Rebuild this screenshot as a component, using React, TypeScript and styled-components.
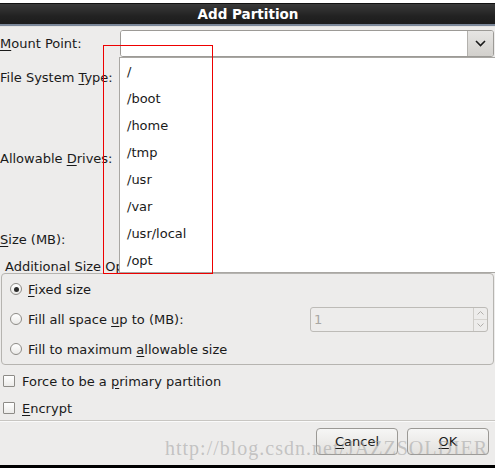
import React from "react";
import styled, { createGlobalStyle } from "styled-components";

const Global = createGlobalStyle`
  html, body { margin: 0; padding: 0; background: #edeceb; }
  body { font-family: "DejaVu Sans", "Noto Sans", sans-serif; font-size: 13px; color: #1a1a1a; }
  * { box-sizing: border-box; }
`;

const Window = styled.div`
  position: relative;
  width: 495px;
  height: 468px;
  overflow: hidden;
  display: flex;
  flex-direction: column;
  background: #edeceb;
`;

const TopStrip = styled.div`
  height: 3px;
  background: #ffffff;
  overflow: hidden;
  display: flex;
  justify-content: center;
`;

const ClippedHeading = styled.div`
  font-weight: bold;
  font-size: 22px;
  line-height: 22px;
  margin-top: -19px;
  color: #000;
  letter-spacing: 1px;
  white-space: nowrap;
`;

const TitleBar = styled.div`
  height: 23px;
  background: linear-gradient(#3a3a3a, #222222 60%, #1c1c1c);
  border-top: 1px solid #111;
  border-bottom: 2px solid #7b8799;
  color: #ffffff;
  font-weight: bold;
  font-size: 13.5px;
  display: flex;
  align-items: center;
  justify-content: center;
  padding-left: 1px;
  box-shadow: 0 1px 0 #e4e3e1;
`;

const Body = styled.div`
  display: flex;
  flex-direction: column;
  padding: 4px 1px 0 0;
`;

const FieldRow = styled.div<{ $h: number; $gap?: number }>`
  display: grid;
  grid-template-columns: 120px 1fr;
  align-items: center;
  height: ${(p) => p.$h}px;
  margin-bottom: ${(p) => p.$gap ?? 8}px;
`;

const Label = styled.span`
  white-space: nowrap;
`;

const U = styled.span`
  text-decoration: underline;
  text-underline-offset: 2px;
`;

const Combo = styled.div`
  height: 27px;
  display: flex;
  border: 1px solid #9c9a96;
  border-radius: 3px;
  background: #fff;
  overflow: hidden;
`;

const ComboEntry = styled.div`
  flex: 1;
  background: #fff;
`;

const ComboButton = styled.div`
  width: 26px;
  border-left: 1px solid #b3b1ad;
  background: linear-gradient(#e6e5e3, #d2d0cc);
  display: flex;
  align-items: center;
  justify-content: center;
`;

const FrameTitle = styled.div`
  height: 13px;
  line-height: 13px;
  padding-left: 5px;
  white-space: nowrap;
`;

const FrameBox = styled.div`
  margin: 0 0 0 1px;
  border: 1px solid #b6b4b0;
  border-radius: 4px;
  padding: 4px 5px 4px 0;
  display: flex;
  flex-direction: column;
  gap: 8px;
`;

const OptionRow = styled.div`
  height: 22px;
  display: flex;
  align-items: center;
`;

const Radio = styled.span<{ $on?: boolean }>`
  width: 12px;
  height: 12px;
  margin: 0 6px 0 8px;
  border-radius: 50%;
  border: 1px solid #8d8b87;
  background: linear-gradient(#ffffff, #ebeae8);
  display: inline-flex;
  align-items: center;
  justify-content: center;
  &::after {
    content: "";
    width: 5px;
    height: 5px;
    border-radius: 50%;
    background: ${(p) => (p.$on ? "#2a2a2a" : "transparent")};
  }
`;

const Spin = styled.div`
  margin-left: auto;
  width: 178px;
  height: 25px;
  flex-shrink: 0;
  display: flex;
  border: 1px solid #bdbbb7;
  border-radius: 3px;
  background: #edeceb;
  color: #a8a6a2;
`;

const SpinValue = styled.div`
  flex: 1;
  padding-left: 3px;
  display: flex;
  align-items: center;
`;

const SpinButtons = styled.div`
  width: 14px;
  border-left: 1px solid #cfcdc9;
  display: flex;
  flex-direction: column;
`;

const SpinHalf = styled.div<{ $top?: boolean }>`
  flex: 1;
  display: flex;
  align-items: center;
  justify-content: center;
  border-top: ${(p) => (p.$top ? "none" : "1px solid #d6d4d0")};
`;

const CheckRow = styled.div<{ $mt: number }>`
  height: 20px;
  margin-top: ${(p) => p.$mt}px;
  display: flex;
  align-items: center;
`;

const Check = styled.span`
  width: 12px;
  height: 12px;
  margin: 0 7px 0 3px;
  border: 1px solid #8d8b87;
  border-radius: 1px;
  background: linear-gradient(#ffffff, #ecebe9);
`;

const Separator = styled.div`
  margin-top: 2px;
  height: 2px;
  border-top: 1px solid #c8c6c2;
  border-bottom: 1px solid #fafafa;
`;

const ButtonBar = styled.div`
  flex: 1;
  display: flex;
  justify-content: flex-end;
  align-items: flex-start;
  gap: 9px;
  padding: 6px 6px 0 0;
`;

const DialogButton = styled.div`
  width: 82px;
  height: 27px;
  border: 1px solid #9b9995;
  border-radius: 4px;
  background: linear-gradient(#f6f6f5, #e3e1de);
  display: flex;
  align-items: center;
  justify-content: center;
`;

const BottomEdge = styled.div`
  height: 3px;
  background: #000;
`;

const Popup = styled.div`
  position: absolute;
  left: 119px;
  top: 57px;
  width: 380px;
  height: 216px;
  background: #fff;
  border: 1px solid #a9a7a3;
  overflow: hidden;
  z-index: 2;
`;

const PopupItem = styled.div`
  height: 27px;
  line-height: 27px;
  padding-left: 7px;
`;

const RedBox = styled.div`
  position: absolute;
  left: 103px;
  top: 45px;
  width: 110px;
  height: 229px;
  border: 1px solid #ee0000;
  z-index: 3;
`;

const Watermark = styled.div`
  position: absolute;
  left: 165px;
  top: 437px;
  font-family: "Liberation Serif", "DejaVu Serif", serif;
  font-size: 20px;
  letter-spacing: 1px;
  color: rgba(160, 160, 160, 0.55);
  white-space: nowrap;
  z-index: 4;
  pointer-events: none;
`;

const mountPoints = ["/", "/boot", "/home", "/tmp", "/usr", "/var", "/usr/local", "/opt"];

export default function App() {
  return (
    <>
      <Global />
      <Window>
        <TopStrip>
          <ClippedHeading>Please Select A Device</ClippedHeading>
        </TopStrip>
        <TitleBar>Add Partition</TitleBar>
        <Body>
          <FieldRow $h={27} $gap={7}>
            <Label>
              <U>M</U>ount Point:
            </Label>
            <Combo>
              <ComboEntry />
              <ComboButton>
                <svg width="11" height="7" viewBox="0 0 11 7">
                  <polyline points="1,1 5.5,5.5 10,1" fill="none" stroke="#1a1a1a" strokeWidth="1.6" />
                </svg>
              </ComboButton>
            </Combo>
          </FieldRow>
          <FieldRow $h={26}>
            <Label>
              File System <U>T</U>ype:
            </Label>
            <span />
          </FieldRow>
          <FieldRow $h={120}>
            <Label>
              Allowable <U>D</U>rives:
            </Label>
            <span />
          </FieldRow>
          <FieldRow $h={26}>
            <Label>
              <U>S</U>ize (MB):
            </Label>
            <span />
          </FieldRow>
          <FrameTitle>Additional Size Options</FrameTitle>
          <FrameBox>
            <OptionRow>
              <Radio $on />
              <span>
                <U>F</U>ixed size
              </span>
            </OptionRow>
            <OptionRow>
              <Radio />
              <span>
                Fill all space <U>u</U>p to (MB):
              </span>
              <Spin>
                <SpinValue>1</SpinValue>
                <SpinButtons>
                  <SpinHalf $top>
                    <svg width="7" height="4" viewBox="0 0 7 4">
                      <polyline points="0.5,3.5 3.5,0.5 6.5,3.5" fill="none" stroke="#b0aeaa" strokeWidth="1" />
                    </svg>
                  </SpinHalf>
                  <SpinHalf>
                    <svg width="7" height="4" viewBox="0 0 7 4">
                      <polyline points="0.5,0.5 3.5,3.5 6.5,0.5" fill="none" stroke="#b0aeaa" strokeWidth="1" />
                    </svg>
                  </SpinHalf>
                </SpinButtons>
              </Spin>
            </OptionRow>
            <OptionRow>
              <Radio />
              <span>
                Fill to maximum <U>a</U>llowable size
              </span>
            </OptionRow>
          </FrameBox>
          <CheckRow $mt={6}>
            <Check />
            <span>
              Force to be a <U>p</U>rimary partition
            </span>
          </CheckRow>
          <CheckRow $mt={7}>
            <Check />
            <span>
              <U>E</U>ncrypt
            </span>
          </CheckRow>
        </Body>
        <Separator />
        <ButtonBar>
          <DialogButton>
            <span>
              <U>C</U>ancel
            </span>
          </DialogButton>
          <DialogButton>
            <span>
              <U>O</U>K
            </span>
          </DialogButton>
        </ButtonBar>
        <BottomEdge />
        <Popup>
          {mountPoints.map((m) => (
            <PopupItem key={m}>{m}</PopupItem>
          ))}
        </Popup>
        <RedBox />
        <Watermark>http://blog.csdn.net/JAZZSOLDIER</Watermark>
      </Window>
    </>
  );
}
